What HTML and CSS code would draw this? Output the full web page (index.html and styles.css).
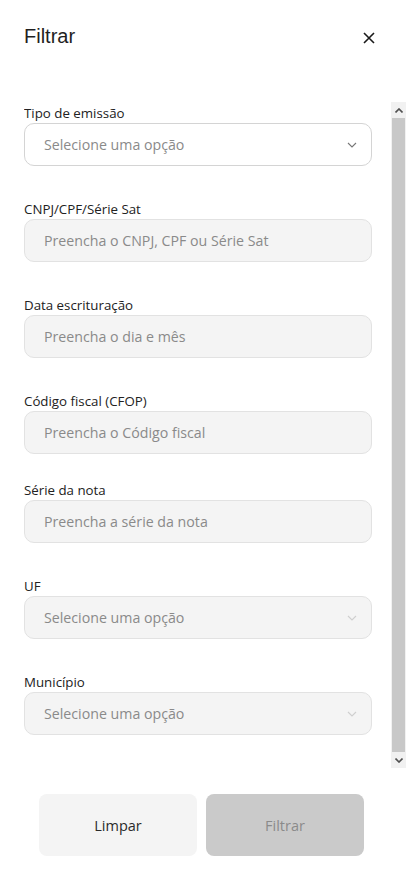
FILE: index.html
```html
<!DOCTYPE html>
<html lang="pt-BR">
<head>
<meta charset="utf-8">
<title>Filtrar</title>
<link rel="stylesheet" href="styles.css">
</head>
<body>
<div class="panel">
  <header class="head">
    <h1 class="title">Filtrar</h1>
    <button class="close" aria-label="Fechar">
      <svg width="12" height="12" viewBox="0 0 12 12"><path d="M1 1L11 11M11 1L1 11" stroke="#1a1a1a" stroke-width="1.6" fill="none"/></svg>
    </button>
  </header>

  <div class="body">
    <div class="fields">
      <div class="field">
        <div class="label">Tipo de emissão</div>
        <div class="input select">
          <span class="ph">Selecione uma opção</span>
          <svg class="chev" width="10" height="6" viewBox="0 0 10 6"><path d="M1 1L5 5L9 1" stroke="#777" stroke-width="1.1" fill="none"/></svg>
        </div>
      </div>
      <div class="field">
        <div class="label">CNPJ/CPF/Série Sat</div>
        <div class="input disabled"><span class="ph">Preencha o CNPJ, CPF ou Série Sat</span></div>
      </div>
      <div class="field">
        <div class="label">Data escrituração</div>
        <div class="input disabled"><span class="ph">Preencha o dia e mês</span></div>
      </div>
      <div class="field tight">
        <div class="label">Código fiscal (CFOP)</div>
        <div class="input disabled"><span class="ph">Preencha o Código fiscal</span></div>
      </div>
      <div class="field">
        <div class="label">Série da nota</div>
        <div class="input disabled"><span class="ph">Preencha a série da nota</span></div>
      </div>
      <div class="field">
        <div class="label">UF</div>
        <div class="input disabled select">
          <span class="ph">Selecione uma opção</span>
          <svg class="chev" width="10" height="6" viewBox="0 0 10 6"><path d="M1 1L5 5L9 1" stroke="#cfcfcf" stroke-width="1.1" fill="none"/></svg>
        </div>
      </div>
      <div class="field">
        <div class="label">Município</div>
        <div class="input disabled select">
          <span class="ph">Selecione uma opção</span>
          <svg class="chev" width="10" height="6" viewBox="0 0 10 6"><path d="M1 1L5 5L9 1" stroke="#cfcfcf" stroke-width="1.1" fill="none"/></svg>
        </div>
      </div>
    </div>
    <div class="scrollbar" aria-hidden="true">
      <div class="sb-btn">
        <svg width="8" height="5" viewBox="0 0 8 5"><path d="M0.5 4.5L4 1L7.5 4.5" stroke="#505050" stroke-width="1.6" fill="none"/></svg>
      </div>
      <div class="sb-track"><div class="sb-thumb"></div></div>
      <div class="sb-btn">
        <svg width="8" height="5" viewBox="0 0 8 5"><path d="M0.5 0.5L4 4L7.5 0.5" stroke="#505050" stroke-width="1.6" fill="none"/></svg>
      </div>
    </div>
  </div>

  <div class="actions">
    <button class="btn btn-clear">Limpar</button>
    <button class="btn btn-apply">Filtrar</button>
  </div>
</div>
</body>
</html>
```

FILE: styles.css
```css
* { box-sizing: border-box; }
html, body { margin: 0; padding: 0; background: #fff; }
body { width: 410px; height: 872px; overflow: hidden; font-family: "Open Sans", "Liberation Sans", sans-serif; color: #222; }

.panel { display: flex; flex-direction: column; height: 872px; }

.head {
  display: flex;
  justify-content: space-between;
  align-items: flex-start;
  padding: 23px 34px 0 24px;
  height: 102px;
}
.title {
  margin: 0;
  font-family: "Liberation Sans", Arial, sans-serif;
  font-weight: 400;
  font-size: 20px;
  line-height: 26px;
  color: #1f1f1f;
}
.close {
  margin-top: 8px;
  width: 14px;
  height: 14px;
  padding: 0;
  border: 0;
  background: none;
  display: flex;
  align-items: center;
  justify-content: center;
}

.body {
  display: flex;
  height: 666px;
  margin-left: 24px;
  margin-right: 4px;
}
.fields {
  flex: 1;
  overflow: hidden;
  padding: 1px 19px 0 0;
}
.field { margin-bottom: 33px; }
.field.tight { margin-bottom: 26px; }
.label {
  font-size: 13.3px;
  line-height: 20px;
  color: #222;
}
.input {
  height: 43px;
  border: 1px solid #d4d4d4;
  border-radius: 10px;
  background: #fff;
  display: flex;
  align-items: center;
  justify-content: space-between;
  padding: 0 14px 0 19px;
}
.input.disabled {
  background: #f4f4f4;
  border-color: #e2e2e2;
}
.ph {
  font-size: 14.2px;
  color: #8a8a8a;
}
.chev { display: block; }

.scrollbar {
  width: 15px;
  display: flex;
  flex-direction: column;
  background: #f1f1f1;
}
.sb-btn {
  height: 16px;
  display: flex;
  align-items: center;
  justify-content: center;
}
.sb-track { flex: 1; display: flex; }
.sb-thumb { flex: 1; background: #c8c8c8; margin: 0 1px; }

.actions {
  display: flex;
  gap: 9px;
  padding: 26px 0 0 39px;
}
.btn {
  width: 158px;
  height: 62px;
  border: 0;
  border-radius: 8px;
  font-family: "Open Sans", "Liberation Sans", sans-serif;
  font-size: 14.5px;
}
.btn-clear { background: #f4f4f4; color: #2a2a2a; }
.btn-apply { background: #cacaca; color: #8a8a8a; }
```
